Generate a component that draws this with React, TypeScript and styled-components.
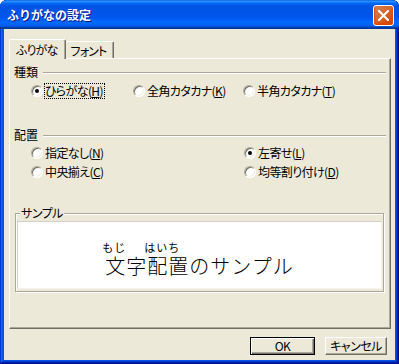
import styled, { createGlobalStyle } from 'styled-components';

const FONT = `"MS UI Gothic", "Noto Sans CJK JP", sans-serif`;

const GlobalStyle = createGlobalStyle`
  body {
    margin: 0;
    background: #fff;
    font-family: ${FONT};
  }
`;

type OptionProps = {
  label: string;
  accessKey: string;
  checked?: boolean;
  focused?: boolean;
};

function Option({ label, accessKey, checked, focused }: OptionProps) {
  return (
    <OptionRow>
      <RadioMark $checked={checked} />
      <OptionLabel $focused={focused}>
        {label}(<u>{accessKey}</u>)
      </OptionLabel>
    </OptionRow>
  );
}

function App() {
  return (
    <>
      <GlobalStyle />
      <Window>
        <TitleBar>
          <Title>ふりがなの設定</Title>
          <CloseButton>
            <svg width="11" height="11" viewBox="0 0 11 11">
              <path d="M1 1 L10 10 M10 1 L1 10" stroke="#fff" strokeWidth="2.2" strokeLinecap="square" />
            </svg>
          </CloseButton>
        </TitleBar>
        <Client>
          <TabStrip>
            <Tab $active>ふりがな</Tab>
            <Tab>フォント</Tab>
          </TabStrip>
          <Panel>
            <SectionHeader>
              <span>種類</span>
              <Rule />
            </SectionHeader>
            <KindRow>
              <Option label="ひらがな" accessKey="H" checked focused />
              <Option label="全角カタカナ" accessKey="K" />
              <Option label="半角カタカナ" accessKey="T" />
            </KindRow>

            <SectionHeader $gap={29}>
              <span>配置</span>
              <Rule />
            </SectionHeader>
            <AlignGrid>
              <Option label="指定なし" accessKey="N" />
              <Option label="左寄せ" accessKey="L" checked />
              <Option label="中央揃え" accessKey="C" />
              <Option label="均等割り付け" accessKey="D" />
            </AlignGrid>

            <Group>
              <Legend>サンプル</Legend>
              <SampleBox>
                <Phrase>
                  <RubyGroup>
                    <RubyText>もじ</RubyText>
                    <span>文字</span>
                  </RubyGroup>
                  <RubyGroup>
                    <RubyText>はいち</RubyText>
                    <span>配置</span>
                  </RubyGroup>
                  <RubyGroup>
                    <RubyText>&nbsp;</RubyText>
                    <span>のサンプル</span>
                  </RubyGroup>
                </Phrase>
              </SampleBox>
            </Group>
          </Panel>
          <ButtonRow>
            <Button $default $width={65}>OK</Button>
            <Button $width={62}>キャンセル</Button>
          </ButtonRow>
        </Client>
      </Window>
    </>
  );
}

export default App;

const Window = styled.div`
  width: 399px;
  height: 364px;
  box-sizing: border-box;
  display: flex;
  flex-direction: column;
  border-radius: 7px 7px 0 0;
  overflow: hidden;
  background: #0855dd;
  box-shadow: inset -1px -1px #00138c, inset 1px 1px #0831d9, inset -2px -2px #001ea0,
    inset 2px 2px #166aee, inset -3px -3px #003bda, inset 3px 3px #0855dd;
`;

const TitleBar = styled.div`
  height: 29px;
  flex-shrink: 0;
  display: flex;
  align-items: center;
  justify-content: space-between;
  padding: 0 5px 0 7px;
  background: linear-gradient(
    to bottom,
    #0058ee 0%,
    #3593ff 4%,
    #288eff 6%,
    #127dff 8%,
    #036ffc 10%,
    #0262ee 14%,
    #0057e5 20%,
    #0054e3 24%,
    #0055eb 56%,
    #005bf5 66%,
    #026afe 76%,
    #0062ef 86%,
    #0052d6 92%,
    #0040ab 94%,
    #003092 100%
  );
`;

const Title = styled.div`
  color: #fff;
  font-size: 12px;
  font-weight: bold;
  line-height: 14px;
  text-shadow: 1px 1px #0f1089;
  margin-top: 1px;
`;

const CloseButton = styled.div`
  width: 21px;
  height: 21px;
  box-sizing: border-box;
  border: 1px solid #fff;
  border-radius: 3px;
  display: flex;
  align-items: center;
  justify-content: center;
  background: radial-gradient(circle at 90% 90%, #cc4600 0%, #dc6527 55%, #cd7546 70%, #e08b60 100%);
  box-shadow: inset 0 -1px 2px 1px #da4600;
  margin-top: 1px;
`;

const Client = styled.div`
  flex: 1;
  margin: 0 4px 4px 4px;
  background: #ece9d8;
  padding: 10px 4px 5px 5px;
  display: flex;
  flex-direction: column;
  font-size: 12px;
  color: #000;
`;

const TabStrip = styled.div`
  height: 19px;
  display: flex;
  align-items: flex-end;
  position: relative;
  z-index: 1;
`;

const Tab = styled.div<{ $active?: boolean }>`
  height: ${(p) => (p.$active ? 20 : 17)}px;
  box-sizing: border-box;
  padding: ${(p) => (p.$active ? '3px 7px 0 6px' : '2px 6px 0 5px')};
  margin-bottom: ${(p) => (p.$active ? -1 : 0)}px;
  line-height: 14px;
  letter-spacing: -0.8px;
  background: #ece9d8;
  border-top: 1px solid #fff;
  border-left: ${(p) => (p.$active ? '1px solid #fff' : 'none')};
  border-right: 1px solid #716f64;
  border-radius: 2px 2px 0 0;
  box-shadow: inset -1px 0 #aca899;
  font-feature-settings: 'palt';
`;

const Panel = styled.div`
  height: 271px;
  box-sizing: border-box;
  border: 1px solid;
  border-color: #fff #716f64 #716f64 #fff;
  box-shadow: inset -1px -1px #aca899;
  padding: 6px 4px 0 4px;
  display: flex;
  flex-direction: column;
`;

const SectionHeader = styled.div<{ $gap?: number }>`
  height: 14px;
  display: flex;
  align-items: center;
  gap: 5px;
  line-height: 14px;
  margin-top: ${(p) => p.$gap ?? 0}px;
`;

const Rule = styled.div`
  flex: 1;
  height: 0;
  border-top: 1px solid #aca899;
  border-bottom: 1px solid #fff;
  margin-top: 2px;
`;

const KindRow = styled.div`
  display: grid;
  grid-template-columns: 102px 110px auto;
  padding-left: 17px;
  margin-top: 4px;
`;

const AlignGrid = styled.div`
  display: grid;
  grid-template-columns: 213px auto;
  row-gap: 3px;
  padding-left: 17px;
  margin-top: 3px;
`;

const OptionRow = styled.div`
  height: 16px;
  display: flex;
  align-items: center;
  gap: 1px;
`;

const RadioMark = styled.span<{ $checked?: boolean }>`
  width: 12px;
  height: 12px;
  flex-shrink: 0;
  box-sizing: border-box;
  border-radius: 50%;
  border: 1px solid;
  border-color: #aca899 #fff #fff #aca899;
  box-shadow: inset 1px 1px #716f64, inset -1px -1px #f1efe2;
  background: #fff;
  display: flex;
  align-items: center;
  justify-content: center;
  &::after {
    content: '';
    width: 4px;
    height: 4px;
    border-radius: 50%;
    background: ${(p) => (p.$checked ? '#000' : 'transparent')};
  }
`;

const OptionLabel = styled.span<{ $focused?: boolean }>`
  border: 1px dotted ${(p) => (p.$focused ? '#000' : 'transparent')};
  padding: 0 1px 0 0;
  line-height: 14px;
  letter-spacing: -0.6px;
  white-space: nowrap;
  font-feature-settings: 'palt';
  u {
    text-underline-offset: 1px;
  }
`;

const Group = styled.fieldset`
  margin: 26px 2px 0 1px;
  padding: 0 1px 2px 1px;
  height: 86px;
  box-sizing: border-box;
  border: 1px solid #aca899;
  box-shadow: 1px 1px #fff, inset 1px 1px #fff;
  min-width: 0;
`;

const Legend = styled.legend`
  margin-left: 3px;
  padding: 0 1px;
  line-height: 14px;
  letter-spacing: -0.5px;
  background: #ece9d8;
  font-feature-settings: 'palt';
`;

const SampleBox = styled.div`
  height: 68px;
  margin-top: 1px;
  box-sizing: border-box;
  background: #fff;
  border: 1px solid;
  border-color: #d4d0c8 #f4f3ee #f4f3ee #d4d0c8;
  display: flex;
  justify-content: center;
  align-items: flex-end;
  padding-bottom: 11px;
`;

const Phrase = styled.div`
  display: flex;
  align-items: flex-end;
  font-size: 20px;
  font-weight: 300;
  letter-spacing: 1px;
`;

const RubyGroup = styled.div`
  display: flex;
  flex-direction: column;
  align-items: flex-start;
  line-height: 22px;
`;

const RubyText = styled.span`
  font-size: 11px;
  font-weight: 400;
  line-height: 13px;
  letter-spacing: 1px;
  margin-left: -3px;
  margin-bottom: 1px;
`;

const ButtonRow = styled.div`
  display: flex;
  justify-content: flex-end;
  gap: 10px;
  margin-top: 8px;
  padding-right: 4px;
`;

const Button = styled.div<{ $default?: boolean; $width: number }>`
  width: ${(p) => p.$width}px;
  height: 18px;
  box-sizing: border-box;
  display: flex;
  align-items: center;
  justify-content: center;
  background: #ece9d8;
  line-height: 14px;
  letter-spacing: -0.5px;
  font-feature-settings: 'palt';
  border: 1px solid;
  border-color: ${(p) => (p.$default ? '#000' : '#fff #716f64 #716f64 #fff')};
  box-shadow: ${(p) =>
    p.$default
      ? 'inset 1px 1px #fff, inset -1px -1px #716f64, inset -2px -2px #aca899'
      : 'inset -1px -1px #aca899'};
`;
